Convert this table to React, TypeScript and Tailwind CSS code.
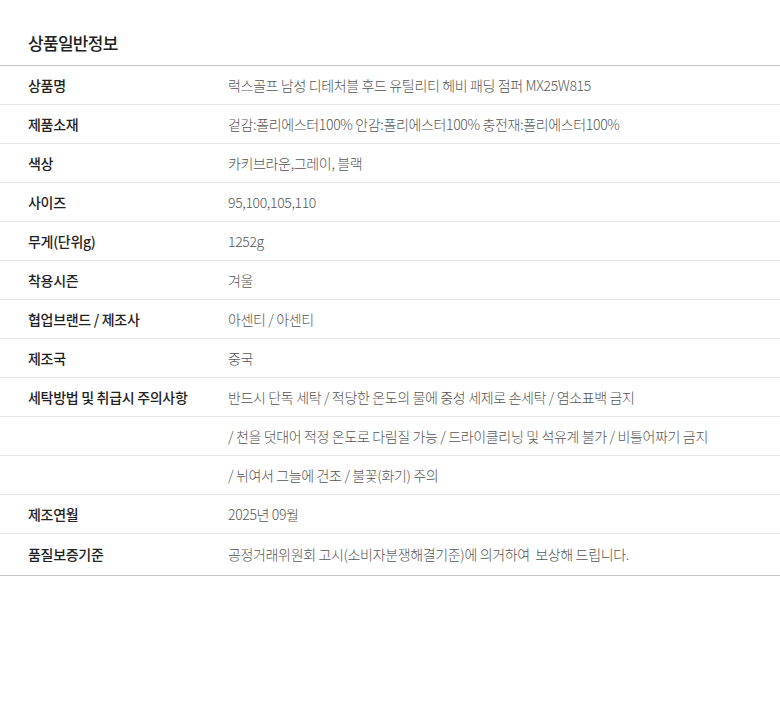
import React from 'react';

interface InfoRow {
  label: string;
  value: string;
}

const ROWS: InfoRow[] = [
  { label: '상품명', value: '럭스골프 남성 디테처블 후드 유틸리티 헤비 패딩 점퍼 MX25W815' },
  { label: '제품소재', value: '겉감:폴리에스터100% 안감:폴리에스터100% 충전재:폴리에스터100%' },
  { label: '색상', value: '카키브라운,그레이, 블랙' },
  { label: '사이즈', value: '95,100,105,110' },
  { label: '무게(단위g)', value: '1252g' },
  { label: '착용시즌', value: '겨울' },
  { label: '협업브랜드 / 제조사', value: '아센티 / 아센티' },
  { label: '제조국', value: '중국' },
  { label: '세탁방법 및 취급시 주의사항', value: '반드시 단독 세탁 / 적당한 온도의 물에 중성 세제로 손세탁 / 염소표백 금지' },
  { label: '', value: '/ 천을 덧대어 적정 온도로 다림질 가능 / 드라이클리닝 및 석유계 불가 / 비틀어짜기 금지' },
  { label: '', value: '/ 뉘여서 그늘에 건조 / 불꽃(화기) 주의' },
  { label: '제조연월', value: '2025년 09월' },
  { label: '품질보증기준', value: '공정거래위원회 고시(소비자분쟁해결기준)에 의거하여  보상해 드립니다.' },
];

export default function App() {
  return (
    <div
      className="w-[780px] h-[713px] bg-white text-[#222]"
      style={{ fontFamily: '"Noto Sans CJK KR", "Noto Sans", sans-serif' }}
    >
      <div className="h-[65px] px-[28px] pt-[30px]">
        <h2 className="text-[17px] font-medium leading-[26px] tracking-[-0.7px]">상품일반정보</h2>
      </div>
      <div className="border-t border-b border-[#c4c4c4]">
        {ROWS.map((row, i) => (
          <div
            key={i}
            className={`flex items-center h-[39px] text-[14px] ${
              i < ROWS.length - 1 ? 'border-b border-[#e6e6e6]' : 'h-[41px]'
            }`}
          >
            <div className="w-[228px] pl-[28px] font-medium text-[#222] tracking-[-0.3px] whitespace-pre">
              {row.label}
            </div>
            <div className="flex-1 font-light text-[#555] tracking-[-0.35px] whitespace-pre">
              {row.value}
            </div>
          </div>
        ))}
      </div>
    </div>
  );
}
